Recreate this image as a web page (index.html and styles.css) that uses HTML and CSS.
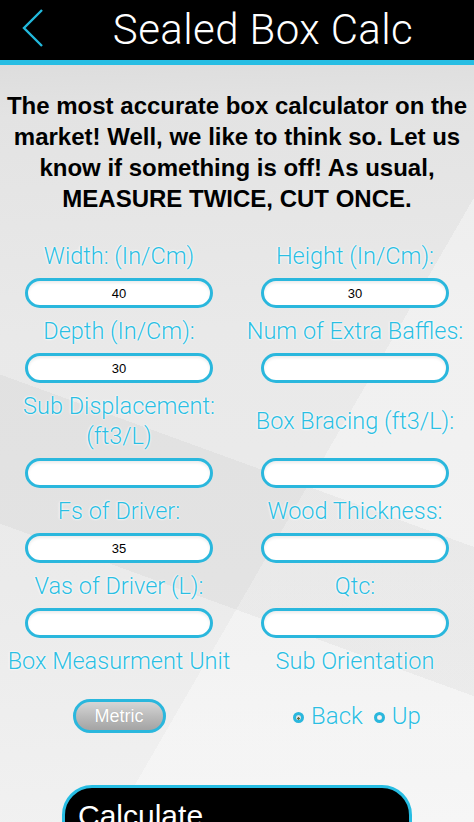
FILE: index.html
```html
<!DOCTYPE html>
<html lang="en">
<head>
<meta charset="utf-8">
<title>Sealed Box Calc</title>
<link rel="stylesheet" href="styles.css">
</head>
<body>
<header class="topbar">
  <div class="back">
    <svg width="22" height="38" viewBox="0 0 22 38"><polyline points="20,1 2,19 20,37" fill="none" stroke="#22b9dc" stroke-width="2.4"/></svg>
  </div>
  <h1 class="title">Sealed Box Calc</h1>
</header>
<div class="accent"></div>
<main class="content">
  <p class="intro">The most accurate box calculator on the<br>market! Well, we like to think so. Let us<br>know if something is off! As usual,<br>MEASURE TWICE, CUT ONCE.</p>
  <div class="form">
    <div class="field"><div class="label">Width: (In/Cm)</div><div class="input">40</div></div>
    <div class="field"><div class="label">Height (In/Cm):</div><div class="input">30</div></div>
    <div class="field"><div class="label">Depth (In/Cm):</div><div class="input">30</div></div>
    <div class="field"><div class="label">Num of Extra Baffles:</div><div class="input"></div></div>
    <div class="field"><div class="label">Sub Displacement:<br>(ft3/L)</div><div class="input"></div></div>
    <div class="field"><div class="label">Box Bracing (ft3/L):</div><div class="input"></div></div>
    <div class="field"><div class="label">Fs of Driver:</div><div class="input">35</div></div>
    <div class="field"><div class="label">Wood Thickness:</div><div class="input"></div></div>
    <div class="field"><div class="label">Vas of Driver (L):</div><div class="input"></div></div>
    <div class="field"><div class="label">Qtc:</div><div class="input"></div></div>
    <div class="field"><div class="label">Box Measurment Unit</div></div>
    <div class="field"><div class="label">Sub Orientation</div></div>
    <div class="choice"><div class="metric">Metric</div></div>
    <div class="choice">
      <div class="radios">
        <span class="radio"><span class="dot selected"></span>Back</span>
        <span class="radio"><span class="dot"></span>Up</span>
      </div>
    </div>
  </div>
  <div class="calc">Calculate</div>
</main>
</body>
</html>
```
FILE: styles.css
```css
html, body {
  margin: 0;
  padding: 0;
}
body {
  width: 474px;
  height: 822px;
  overflow: hidden;
  font-family: "Liberation Sans", Arial, sans-serif;
  background-color: #ebebeb;
  background-image:
    linear-gradient(200deg, rgba(0,0,0,0) 0 55%, rgba(0,0,0,0.035) 55% 70%, rgba(0,0,0,0) 70%),
    linear-gradient(120deg, rgba(0,0,0,0) 0 62%, rgba(255,255,255,0.35) 62% 100%),
    linear-gradient(178deg, #d6d6d6 0%, #e3e3e3 14%, #e9e9e9 40%, #ebebeb 70%, #f1f1f1 100%);
}
.topbar {
  height: 60px;
  background: #000;
  display: flex;
  align-items: center;
}
.back {
  width: 52px;
  padding-left: 22px;
  box-sizing: border-box;
  display: flex;
  align-items: center;
  padding-bottom: 4px;
}
.title {
  flex: 1;
  margin: 0;
  text-align: center;
  color: #fff;
  font-family: Roboto, "Liberation Sans", sans-serif;
  font-weight: 300;
  font-size: 42px;
  line-height: 60px;
  letter-spacing: 0.4px;
}
.accent {
  height: 5px;
  background: #27bde3;
}
.content {
  display: flex;
  flex-direction: column;
  align-items: center;
}
.intro {
  margin: 25px 0 0;
  font-weight: 700;
  font-size: 24px;
  line-height: 31px;
  text-align: center;
  color: #000;
  white-space: nowrap;
}
.form {
  margin-top: 27px;
  display: grid;
  grid-template-columns: 188px 188px;
  column-gap: 48px;
  row-gap: 8px;
}
.field {
  display: flex;
  flex-direction: column;
  align-items: center;
  gap: 7px;
}
.label {
  flex: 1;
  display: flex;
  align-items: center;
  justify-content: center;
  text-align: center;
  white-space: nowrap;
  color: #2bbee2;
  font-family: Roboto, "Liberation Sans", sans-serif;
  font-weight: 300;
  font-size: 23.5px;
  line-height: 30px;
  text-shadow: 0 0 1px #fff, 0 0 2px #fff, 0 0 3px rgba(255,255,255,0.8);
}
.input {
  width: 100%;
  height: 30px;
  box-sizing: border-box;
  border: 3px solid #2ab7dd;
  border-radius: 15px;
  background: #fff;
  box-shadow: inset 0 2px 3px rgba(0,0,0,0.08);
  display: flex;
  align-items: center;
  justify-content: center;
  font-size: 13px;
  color: #000;
}
.choice {
  margin-top: 15px;
  display: flex;
  justify-content: center;
  align-items: center;
  height: 34px;
}
.metric {
  width: 93px;
  height: 34px;
  box-sizing: border-box;
  border: 3px solid #2ab7dd;
  border-radius: 17px;
  background: linear-gradient(#d6d6d6, #b9b9b9 55%, #a4a4a4);
  color: #fff;
  font-size: 18px;
  display: flex;
  align-items: center;
  justify-content: center;
  text-shadow: 0 0 1px rgba(0,0,0,0.15);
}
.radios {
  display: flex;
  align-items: center;
  gap: 11px;
  margin-left: 4px;
}
.radio {
  display: inline-flex;
  align-items: center;
  gap: 7px;
  color: #2bbee2;
  font-family: Roboto, "Liberation Sans", sans-serif;
  font-weight: 300;
  font-size: 24px;
  text-shadow: 0 0 1px #fff, 0 0 2px #fff;
}
.dot {
  width: 11px;
  height: 11px;
  box-sizing: border-box;
  border: 3px solid #2ab7dd;
  border-radius: 50%;
  background: radial-gradient(circle, #f4f4f4 0 40%, #d4d4d4 100%);
  margin-top: 3px;
}
.dot.selected {
  background: radial-gradient(circle at 50% 70%, #6b6b3c 0 25%, #e6e6e6 35%, #cfcfcf 100%);
}
.calc {
  margin-top: 52px;
  width: 350px;
  height: 80px;
  box-sizing: border-box;
  border: 3px solid #27bde3;
  border-radius: 30px;
  background: #000;
  color: #fff;
  font-size: 30px;
  line-height: 36px;
  padding: 10px 0 0 13px;
}
```
